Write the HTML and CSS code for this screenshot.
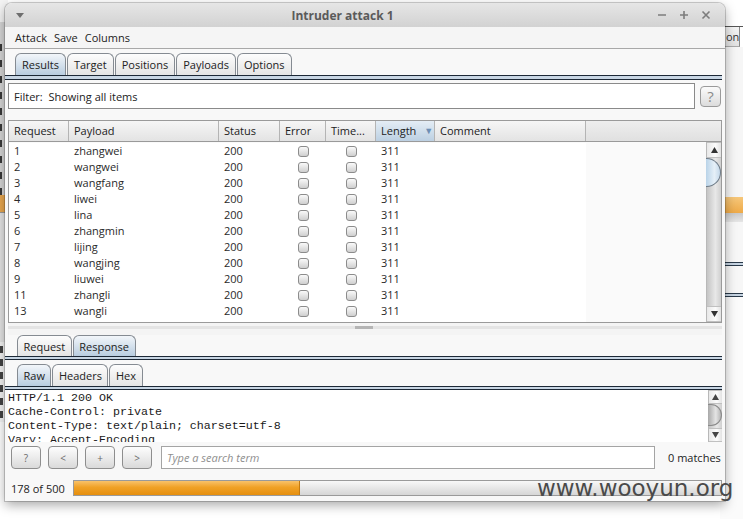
FILE: index.html
```html
<!DOCTYPE html>
<html>
<head>
<meta charset="utf-8">
<title>Intruder attack 1</title>
<link rel="stylesheet" href="styles.css">
</head>
<body>
<div class="desk">
  <div class="bg-left">
    <div class="bl-a"></div>
    <div class="bl-b"><i></i><i></i><i></i><i></i><i></i><i></i><i></i><i></i><i></i><i></i></div>
    <div class="bl-c"></div>
    <div class="bl-d"></div>
    <div class="bl-e"><i></i><i></i><i></i><i></i><i></i><i></i></div>
    <div class="bl-f"></div>
  </div>
  <div class="bg-right">
    <div class="br-top"></div>
    <div class="br-tab"><span>on</span></div>
    <div class="br-white"></div>
    <div class="br-orange"></div>
    <div class="br-gray"></div>
    <div class="br-white2"></div>
    <div class="br-dline"></div>
    <div class="br-gap"></div>
    <div class="br-dline"></div>
    <div class="br-rest"></div>
  </div>

  <div class="win">
    <div class="titlebar">
      <div class="tb-left">
        <svg width="8" height="5" viewBox="0 0 8 5"><path d="M0 0 H8 L4 5 Z" fill="#6e6e6e"/></svg>
      </div>
      <div class="title">Intruder attack 1</div>
      <div class="tb-right">
        <svg width="10" height="10" viewBox="0 0 10 10"><path d="M1 5 H9" stroke="#7c7c7c" stroke-width="1.6"/></svg>
        <svg width="10" height="10" viewBox="0 0 10 10"><path d="M1 5 H9 M5 1 V9" stroke="#7c7c7c" stroke-width="1.6"/></svg>
        <svg width="10" height="10" viewBox="0 0 10 10"><path d="M1.5 1.5 L8.5 8.5 M8.5 1.5 L1.5 8.5" stroke="#7c7c7c" stroke-width="1.6"/></svg>
      </div>
    </div>

    <div class="menubar">
      <span>Attack</span><span>Save</span><span>Columns</span>
    </div>

    <div class="tabs main-tabs">
      <div class="tab sel">Results</div>
      <div class="tab">Target</div>
      <div class="tab">Positions</div>
      <div class="tab">Payloads</div>
      <div class="tab">Options</div>
    </div>
    <div class="tabline main-line"></div>

    <div class="filter-row">
      <div class="filter">Filter:&nbsp; Showing all items</div>
      <div class="help">?</div>
    </div>

    <div class="table">
      <div class="thead">
        <div class="th">Request</div>
        <div class="th">Payload</div>
        <div class="th">Status</div>
        <div class="th">Error</div>
        <div class="th">Time...</div>
        <div class="th sorted">Length <span class="sort-arrow">▼</span></div>
        <div class="th">Comment</div>
        <div class="th th-fill"></div>
      </div>
      <div class="tbody-wrap">
        <div class="tbody">
          <div class="tr"><span>1</span><span>zhangwei</span><span>200</span><span class="cb"><i></i></span><span class="cb"><i></i></span><span>311</span><span></span></div>
          <div class="tr"><span>2</span><span>wangwei</span><span>200</span><span class="cb"><i></i></span><span class="cb"><i></i></span><span>311</span><span></span></div>
          <div class="tr"><span>3</span><span>wangfang</span><span>200</span><span class="cb"><i></i></span><span class="cb"><i></i></span><span>311</span><span></span></div>
          <div class="tr"><span>4</span><span>liwei</span><span>200</span><span class="cb"><i></i></span><span class="cb"><i></i></span><span>311</span><span></span></div>
          <div class="tr"><span>5</span><span>lina</span><span>200</span><span class="cb"><i></i></span><span class="cb"><i></i></span><span>311</span><span></span></div>
          <div class="tr"><span>6</span><span>zhangmin</span><span>200</span><span class="cb"><i></i></span><span class="cb"><i></i></span><span>311</span><span></span></div>
          <div class="tr"><span>7</span><span>lijing</span><span>200</span><span class="cb"><i></i></span><span class="cb"><i></i></span><span>311</span><span></span></div>
          <div class="tr"><span>8</span><span>wangjing</span><span>200</span><span class="cb"><i></i></span><span class="cb"><i></i></span><span>311</span><span></span></div>
          <div class="tr"><span>9</span><span>liuwei</span><span>200</span><span class="cb"><i></i></span><span class="cb"><i></i></span><span>311</span><span></span></div>
          <div class="tr"><span>11</span><span>zhangli</span><span>200</span><span class="cb"><i></i></span><span class="cb"><i></i></span><span>311</span><span></span></div>
          <div class="tr"><span>13</span><span>wangli</span><span>200</span><span class="cb"><i></i></span><span class="cb"><i></i></span><span>311</span><span></span></div>
          <div class="tr"><span>14</span><span>zhangjie</span><span>200</span><span class="cb"><i></i></span><span class="cb"><i></i></span><span>311</span><span></span></div>
        </div>
        <div class="vscroll">
          <div class="vs-btn"><svg width="7" height="6" viewBox="0 0 7 6"><path d="M0 6 L3.5 0 L7 6 Z" fill="#333"/></svg></div>
          <div class="vs-track"><div class="vs-thumb"></div></div>
          <div class="vs-btn"><svg width="7" height="6" viewBox="0 0 7 6"><path d="M0 0 L3.5 6 L7 0 Z" fill="#333"/></svg></div>
        </div>
      </div>
    </div>

    <div class="splitter"><div class="grip"></div></div>

    <div class="tabs sub-tabs">
      <div class="tab">Request</div>
      <div class="tab sel">Response</div>
    </div>
    <div class="tabline"></div>

    <div class="tabs sub-tabs raw-tabs">
      <div class="tab sel">Raw</div>
      <div class="tab">Headers</div>
      <div class="tab">Hex</div>
    </div>
    <div class="tabline"></div>

    <div class="textarea">
      <pre class="raw">HTTP/1.1 200 OK
Cache-Control: private
Content-Type: text/plain; charset=utf-8
Vary: Accept-Encoding</pre>
      <div class="vscroll small">
        <div class="vs-btn"><svg width="7" height="6" viewBox="0 0 7 6"><path d="M0 6 L3.5 0 L7 6 Z" fill="#444"/></svg></div>
        <div class="vs-track"><div class="vs-thumb gray"></div></div>
        <div class="vs-btn"><svg width="7" height="6" viewBox="0 0 7 6"><path d="M0 0 L3.5 6 L7 0 Z" fill="#444"/></svg></div>
      </div>
    </div>

    <div class="searchbar">
      <div class="btn">?</div>
      <div class="btn">&lt;</div>
      <div class="btn">+</div>
      <div class="btn">&gt;</div>
      <div class="search">Type a search term</div>
      <div class="matches">0 matches</div>
    </div>

    <div class="status">
      <div class="count">178 of 500</div>
      <div class="progress"><div class="fill" style="width:35%"></div></div>
    </div>
  </div>

  <div class="watermark">www.wooyun.org</div>
</div>
</body>
</html>
```

FILE: styles.css
```css
* { box-sizing: border-box; }
html, body { margin: 0; padding: 0; }
body { background: #ffffff; }

.desk {
  position: relative;
  width: 743px;
  height: 519px;
  overflow: hidden;
  background: #ffffff;
  font-family: "Open Sans", "Noto Sans", sans-serif;
}

/* background windows (desktop) */
.bg-left {
  position: absolute;
  left: 0;
  top: 0;
  width: 8px;
  height: 519px;
  display: flex;
  flex-direction: column;
}
.bl-a { height: 22px; background: #f4f4f4; }
.bl-b { height: 173px; background: #d6d6d6; display: flex; flex-direction: column; padding-top: 22px; gap: 9px; }
.bl-b i { display: block; width: 2px; height: 7px; background: #3a3a3a; }
.bl-c { height: 17px; background: #e9a850; }
.bl-d { height: 130px; background: #e4e4e4; border-top: 1px solid #999; }
.bl-e { height: 80px; background: #f4f4f4; display: flex; flex-direction: column; gap: 6px; padding-top: 4px; }
.bl-e i { display: block; width: 3px; height: 7px; background: #444; }
.bl-f { flex: 1; background: #ffffff; }

.bg-right {
  position: absolute;
  left: 720px;
  top: 0;
  width: 23px;
  height: 519px;
  display: flex;
  flex-direction: column;
}
.br-top { height: 27px; background: #ffffff; border-bottom: 1px solid #555; }
.br-tab {
  height: 20px;
  background: linear-gradient(#f4f4f4, #e2e2e2);
  border-bottom: 1px solid #aaa;
  border-right: 1px solid #888;
  margin-right: 3px;
  font-size: 11px;
  color: #333;
  line-height: 19px;
  padding-left: 6px;
}
.br-white { height: 150px; background: #f6f6f6; }
.br-orange { height: 16px; background: linear-gradient(#f6c77a, #eeaa48); }
.br-gray { height: 9px; background: linear-gradient(#c9c9c9, #e6e6e6); }
.br-white2 { height: 40px; background: #f7f7f7; }
.br-dline { height: 4px; border-top: 1px solid #2a3a4a; border-bottom: 1px solid #2a3a4a; background: #c6d4e2; }
.br-gap { height: 27px; background: #f7f7f7; }
.br-rest { flex: 1; background: #fbfbfb; }

/* main window */
.win {
  position: absolute;
  left: 5px;
  top: 3px;
  width: 720px;
  height: 498px;
  display: flex;
  flex-direction: column;
  background: #f8f8f8;
  border-radius: 7px 7px 0 0;
  box-shadow: 0 4px 12px rgba(0, 0, 0, 0.35), 0 0 0 1px rgba(0, 0, 0, 0.18);
  font-size: 11px;
  color: #222;
  overflow: hidden;
}

.titlebar {
  height: 24px;
  flex: none;
  display: flex;
  align-items: center;
  background: linear-gradient(#e6e6e6, #d2d2d2);
  border-radius: 7px 7px 0 0;
}
.tb-left { width: 25px; padding-left: 11px; display: flex; align-items: center; }
.title {
  flex: 1;
  text-align: center;
  font-weight: bold;
  font-size: 12px;
  color: #5a5a5a;
}
.tb-right {
  width: 70px;
  display: flex;
  align-items: center;
  gap: 12px;
  padding-left: 2px;
}

.menubar {
  height: 22px;
  flex: none;
  display: flex;
  align-items: center;
  gap: 7px;
  padding-left: 10px;
  background: #f5f5f5;
  border-bottom: 1px solid #a8a8a8;
  color: #222;
}

/* tabs */
.tabs {
  flex: none;
  display: flex;
  align-items: flex-end;
  gap: 1px;
}
.main-tabs { height: 22px; margin-top: 4px; padding-left: 10px; }
.sub-tabs { height: 21px; padding-left: 12px; }
.raw-tabs { height: 22px; margin-top: 4px; }
.tab {
  height: 100%;
  display: flex;
  align-items: center;
  padding: 0 6px;
  border: 1px solid #858b92;
  border-bottom: none;
  border-radius: 6px 6px 0 0;
  background: linear-gradient(#fdfdfd, #e4e4e4);
  color: #222;
}
.sub-tabs .tab { padding: 0 5.5px; }
.tab.sel { background: linear-gradient(#f2f6fa, #b9cde0); }

.tabline {
  flex: none;
  height: 4px;
  margin-right: 3px;
  border-top: 1px solid #1c2836;
  border-bottom: 1px solid #1c2836;
  background: #c8d6e4;
}
.main-line { height: 5px; }

/* filter */
.filter-row {
  flex: none;
  height: 26px;
  margin-top: 3px;
  padding: 0 4px 0 3px;
  display: flex;
  align-items: center;
  gap: 5px;
}
.filter {
  flex: 1;
  height: 26px;
  background: #ffffff;
  border: 1px solid #8a8a8a;
  display: flex;
  align-items: center;
  padding-left: 5px;
}
.help {
  width: 21px;
  height: 21px;
  border: 1px solid #9a9a9a;
  border-radius: 4px;
  background: linear-gradient(#fbfbfb, #dcdcdc);
  color: #8a8a8a;
  font-size: 15px;
  display: flex;
  align-items: center;
  justify-content: center;
}

/* table */
.table {
  flex: none;
  height: 203px;
  margin: 11px 3px 0 3px;
  border: 1px solid #9a9a9a;
  display: flex;
  flex-direction: column;
  background: #fafafa;
}
.thead {
  height: 21px;
  flex: none;
  display: grid;
  grid-template-columns: 60px 150px 61px 46px 50px 59px 151px 1fr;
  background: linear-gradient(#f6f6f6, #e3e3e3);
  border-bottom: 1px solid #9a9a9a;
}
.th {
  border-right: 1px solid #b4b4b4;
  padding-left: 5px;
  padding-bottom: 2px;
  display: flex;
  align-items: center;
  color: #222;
}
.th-fill { border-right: none; background: linear-gradient(#eeeeee, #e0e0e0); }
.th.sorted { background: linear-gradient(#e4edf5, #bcd0e2); }
.sort-arrow { color: #6d8fb5; font-size: 9px; margin-left: 8px; }

.tbody-wrap {
  flex: 1;
  display: flex;
  min-height: 0;
}
.tbody {
  flex: 1;
  overflow: hidden;
  padding-top: 1px;
}
.tr {
  display: grid;
  grid-template-columns: 60px 150px 61px 46px 50px 59px 151px;
  width: 577px;
  height: 16px;
  background: #ffffff;
  color: #2a2a2a;
}
.tr span { padding-left: 5px; line-height: 16px; }
.tr .cb { padding-left: 0; display: flex; align-items: center; justify-content: center; }
.cb i {
  display: block;
  width: 11px;
  height: 11px;
  border: 1px solid #8c8c8c;
  border-radius: 3px;
  background: linear-gradient(#fafafa, #cfcfcf);
}

.vscroll {
  width: 15px;
  flex: none;
  display: flex;
  flex-direction: column;
  border-left: 1px solid #b8b8b8;
  background: linear-gradient(90deg, #c4c4c4, #e8e8e8 60%, #cfcfcf);
}
.vs-btn {
  height: 16px;
  flex: none;
  display: flex;
  align-items: center;
  justify-content: center;
  background: linear-gradient(90deg, #e8e8e8, #fbfbfb 60%, #e2e2e2);
  border-top: 1px solid #c0c0c0;
  border-bottom: 1px solid #c0c0c0;
}
.vs-track { flex: 1; }
.vs-thumb {
  width: 15px;
  height: 29px;
  margin-left: -1px;
  border: 1px solid #6f7c88;
  border-left: none;
  border-radius: 0 15px 15px 0;
  background: linear-gradient(90deg, #b9d3e8, #e6f0f8 60%, #c4d8ea);
}

.splitter {
  flex: none;
  height: 12px;
  background: #f4f4f4;
  padding-top: 3px;
  margin: 0 3px;
}
.grip {
  height: 3px;
  background: linear-gradient(90deg, #e4e4e4 0, #e4e4e4 347px, #b4b4b4 347px, #b4b4b4 365px, #e4e4e4 365px);
}

/* raw text area */
.textarea {
  flex: none;
  height: 52px;
  margin: 0 3px;
  display: flex;
  background: #ffffff;
}
.raw {
  flex: 1;
  margin: 0;
  padding: 1px 0 0 0;
  font-family: "Liberation Mono", monospace;
  font-size: 11.67px;
  line-height: 14px;
  color: #1a1a1a;
  overflow: hidden;
}
.vscroll.small { width: 14px; }
.vscroll.small .vs-btn { height: 14px; }
.vs-thumb.gray {
  width: 14px;
  height: 22px;
  border-color: #8a8a8a;
  border-radius: 0 11px 11px 0;
  background: linear-gradient(90deg, #a8a8a8, #e4e4e4 60%, #b4b4b4);
}

/* search bar */
.searchbar {
  flex: none;
  height: 23px;
  margin-top: 4px;
  padding-left: 6px;
  display: flex;
  align-items: center;
}
.btn {
  width: 30px;
  height: 23px;
  margin-right: 7px;
  border: 1px solid #8e8e8e;
  border-radius: 4px;
  background: linear-gradient(#fdfdfd, #dadada);
  color: #6a6a6a;
  font-size: 10px;
  display: flex;
  align-items: center;
  justify-content: center;
}
.searchbar .btn:nth-child(4) { margin-right: 9px; }
.search {
  width: 494px;
  height: 23px;
  border: 1px solid #a4a4a4;
  background: #ffffff;
  display: flex;
  align-items: center;
  padding-left: 5px;
  font-style: italic;
  color: #8e8e8e;
}
.matches { margin-left: 13px; color: #222; }

/* status */
.status {
  flex: none;
  height: 16px;
  margin-top: 11px;
  padding-left: 6px;
  display: flex;
  align-items: center;
}
.count { width: 62px; color: #222; }
.progress {
  flex: 1;
  height: 16px;
  margin-right: 3px;
  border: 1px solid #9a9a9a;
  background: linear-gradient(#f8f8f8, #d6d6d6);
}
.fill {
  height: 100%;
  background: linear-gradient(#f9c26a, #f0a126 45%, #e58f0f);
  border-right: 1px solid #c47a10;
}

.watermark {
  position: absolute;
  left: 537px;
  top: 473px;
  font-family: "DejaVu Sans", sans-serif;
  font-size: 23px;
  color: #4a4a4a;
  line-height: 30px;
}
```
